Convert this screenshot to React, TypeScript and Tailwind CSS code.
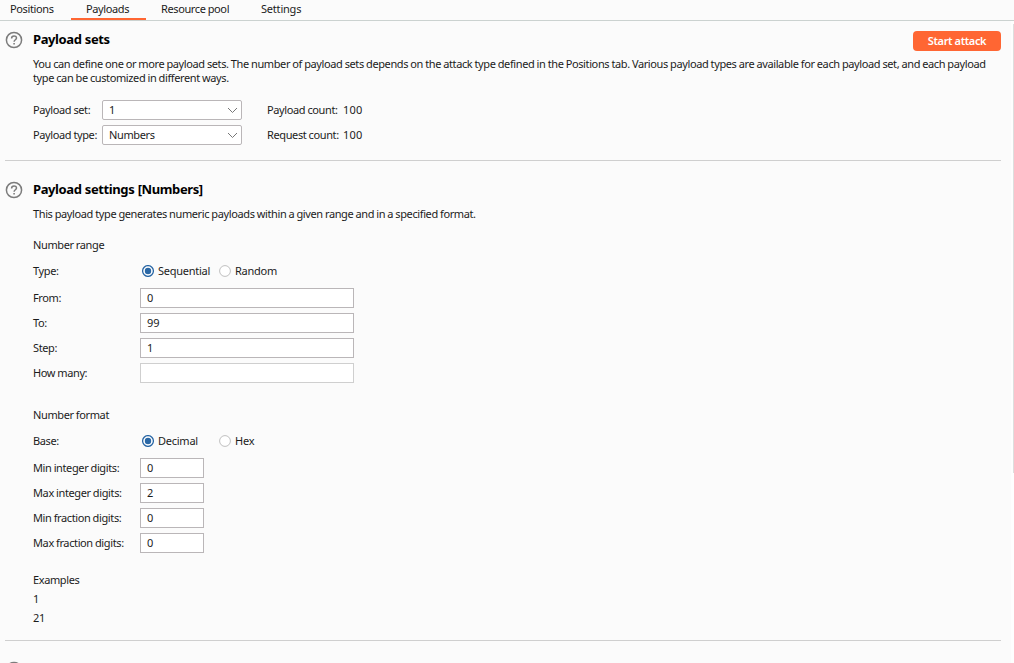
import { useState } from "react"

const tabs = [
  { name: "Positions", className: "ml-[10px] w-[61px]" },
  { name: "Payloads", className: "w-[75px] pl-[15px]" },
  { name: "Resource pool", className: "w-[100px] pl-[15px]" },
  { name: "Settings", className: "pl-[15px] tracking-[-0.2px]" },
]

function HelpIcon() {
  return (
    <svg className="block h-[18px] w-[18px] shrink-0" viewBox="0 0 18 18" fill="none" stroke="#7c7c7c">
      <circle cx="9" cy="9" r="7.6" strokeWidth="1.5" />
      <path d="M6.6 7.4c0-3.3 4.9-3.1 4.9-.4 0 1.8-2.4 1.7-2.4 3.7" strokeWidth="1.5" />
      <path d="M9.1 11.9v1.6" strokeWidth="1.6" />
    </svg>
  )
}

function SectionTitle({ children }: { children: string }) {
  return (
    <div className="flex h-[20px] items-center">
      <HelpIcon />
      <h2 className="ml-[10px] pb-[2px] text-[13px] leading-[18px] font-bold tracking-[-0.4px] text-black [word-spacing:0.4px]">
        {children}
      </h2>
    </div>
  )
}

function Select({ value }: { value: string }) {
  return (
    <button className="flex h-[20px] w-[140px] items-center justify-between rounded-[2px] border border-[#bab6b8] bg-white pr-[3px] pl-[6px]">
      <span>{value}</span>
      <svg className="h-[7px] w-[11px]" viewBox="0 0 11 7" fill="none" stroke="#777">
        <path d="M1 1l4.5 4.5L10 1" />
      </svg>
    </button>
  )
}

function Radio({ label, checked, onSelect }: { label: string; checked: boolean; onSelect: () => void }) {
  return (
    <button className="flex items-center" onClick={onSelect}>
      <svg className="h-[12px] w-[12px]" viewBox="0 0 12 12">
        <circle cx="6" cy="6" r="5.4" fill="#fff" stroke={checked ? "#2a67a5" : "#bfbfbf"} strokeWidth={checked ? 1.3 : 1} />
        {checked && <circle cx="6" cy="6" r="3.2" fill="#2a67a5" />}
      </svg>
      <span className="ml-[4px] tracking-[-0.25px]">{label}</span>
    </button>
  )
}

function RadioRow({ label, options }: { label: string; options: string[] }) {
  const [selected, setSelected] = useState(options[0])
  return (
    <div className="flex h-[20px] items-center">
      <span className="w-[109px]">{label}</span>
      <div className="grid grid-cols-[77px_auto]">
        {options.map((option) => (
          <Radio key={option} label={option} checked={selected === option} onSelect={() => setSelected(option)} />
        ))}
      </div>
    </div>
  )
}

function Field({ label, value, short, disabled }: { label: string; value: string; short?: boolean; disabled?: boolean }) {
  return (
    <label className="flex h-[20px] items-center">
      <span className="w-[107px]">{label}</span>
      <input
        className={`h-[20px] border bg-white px-[6px] pb-px tracking-normal outline-none ${short ? "w-[64px]" : "w-[214px]"} ${disabled ? "border-[#cfcfcf]" : "border-[#bab6b8]"}`}
        defaultValue={value}
        disabled={disabled}
      />
    </label>
  )
}

export default function App() {
  return (
    <div className="flex h-[663px] w-[1014px] flex-col overflow-hidden bg-[#fbfbfb] font-['Noto_Sans',sans-serif] text-[11px] leading-[14px] tracking-[-0.38px] whitespace-nowrap text-[#1c1c1c] [word-spacing:-0.3px]">
      {/* Tabs */}
      <nav className="flex h-[21px] shrink-0 border-b border-[#cbd2d0]">
        {tabs.map((tab) => (
          <div
            key={tab.name}
            className={`h-[20px] border-b-2 pt-[2px] ${tab.className} ${tab.name === "Payloads" ? "border-[#ff6633]" : "border-transparent"}`}
          >
            {tab.name}
          </div>
        ))}
      </nav>

      <div className="flex min-h-0 flex-1">
        <main className="w-[1011px] shrink-0 pr-[10px] pl-[5px]">
          {/* Payload sets */}
          <section className="h-[140px] border-b border-[#cfcfcf] pt-[9px]">
            <div className="flex justify-between">
              <SectionTitle>Payload sets</SectionTitle>
              <button className="mt-[1px] h-[20px] w-[88px] rounded-[4px] bg-[#ff6633] font-semibold text-white">
                Start attack
              </button>
            </div>
            <p className="mt-[6px] ml-[28px]">
              You can define one or more payload sets. The number of payload sets depends on the attack type defined in the Positions tab. Various payload types are available for each payload set, and each payload
              <br />
              type can be customized in different ways.
            </p>
            <div className="mt-[15px] ml-[28px] grid grid-cols-[69px_165px_76px_auto] items-center gap-y-[5px]">
              <span>Payload set:</span>
              <Select value="1" />
              <span>Payload count:</span>
              <span className="tracking-[0.2px]">100</span>
              <span>Payload type:</span>
              <Select value="Numbers" />
              <span>Request count:</span>
              <span className="tracking-[0.2px]">100</span>
            </div>
          </section>

          {/* Payload settings */}
          <section className="h-[480px] border-b border-[#cfcfcf] pt-[19px]">
            <SectionTitle>Payload settings [Numbers]</SectionTitle>
            <div className="ml-[28px]">
              <p className="mt-[7px]">This payload type generates numeric payloads within a given range and in a specified format.</p>

              <h3 className="mt-[17px] mb-[9px]">Number range</h3>
              <RadioRow label="Type:" options={["Sequential", "Random"]} />
              <div className="mt-[7px] flex flex-col gap-[5px]">
                <Field label="From:" value="0" />
                <Field label="To:" value="99" />
                <Field label="Step:" value="1" />
                <Field label="How many:" value="" disabled />
              </div>

              <h3 className="mt-[25px] mb-[9px]">Number format</h3>
              <RadioRow label="Base:" options={["Decimal", "Hex"]} />
              <div className="mt-[7px] flex flex-col gap-[5px]">
                <Field label="Min integer digits:" value="0" short />
                <Field label="Max integer digits:" value="2" short />
                <Field label="Min fraction digits:" value="0" short />
                <Field label="Max fraction digits:" value="0" short />
              </div>

              <h3 className="mt-[20px]">Examples</h3>
              <p className="mt-[5px]">1</p>
              <p className="mt-[5px]">21</p>
            </div>
          </section>

          <section className="pt-[20px]">
            <HelpIcon />
          </section>
        </main>

        {/* Scrollbar */}
        <div className="flex w-[3px] justify-end bg-[#fefefe] pt-[3px]">
          <div className="h-[449px] w-px bg-[#dedede]" />
        </div>
      </div>
    </div>
  )
}
